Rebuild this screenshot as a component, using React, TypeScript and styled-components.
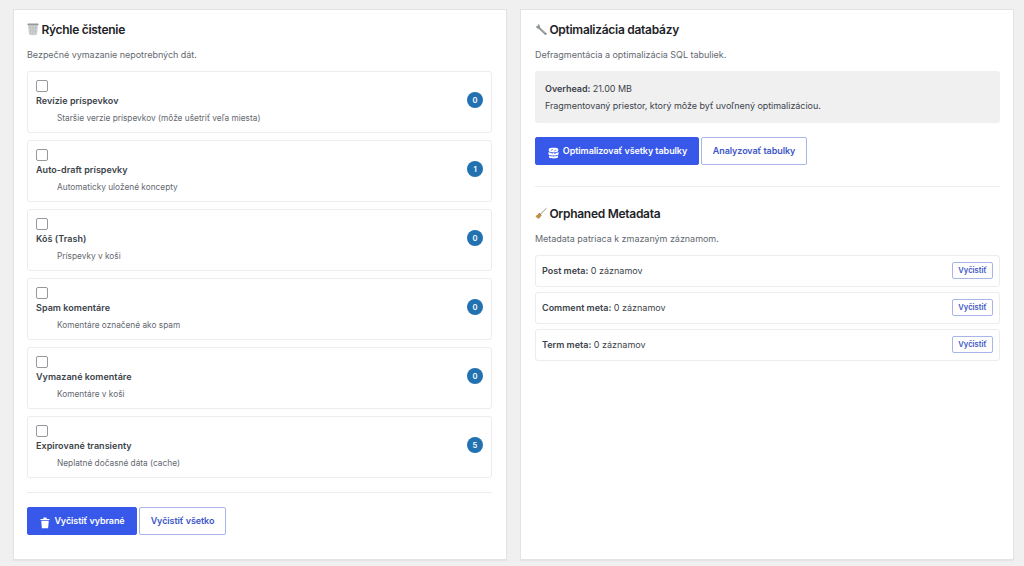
import React from "react";
import styled, { createGlobalStyle, css } from "styled-components";

const GlobalStyle = createGlobalStyle`
  *, *::before, *::after { box-sizing: border-box; }
  body {
    margin: 0;
    background: #f0f0f1;
    color: #3c434a;
    font-family: Inter, "Liberation Sans", sans-serif;
    font-size: 9px;
    line-height: 17px;
  }
`;

const Page = styled.main`
  display: grid;
  grid-template-columns: 494px 494px;
  gap: 13px;
  height: 566px;
  padding: 9px 0 6px 13px;
`;

const Panel = styled.section<{ $inset: number }>`
  display: flex;
  flex-direction: column;
  padding: 11px ${(p) => 27 - p.$inset}px 13px ${(p) => p.$inset}px;
  background: #fff;
  border: 1px solid #e2e3e4;
  box-shadow: 0 1px 1px rgba(0, 0, 0, 0.04);
`;

const Title = styled.h2`
  display: flex;
  align-items: center;
  gap: 2.4px;
  margin: 0;
  height: 17px;
  color: #1d2327;
  font-size: 12px;
  font-weight: 600;
  letter-spacing: -0.28px;
  white-space: nowrap;
  svg { flex: none; }
`;

const Lead = styled.p`
  margin: 8px 0;
  color: #646970;
  font-size: 9px;
  letter-spacing: -0.03px;
  white-space: nowrap;
`;

const CleanList = styled.div`
  display: flex;
  flex-direction: column;
  gap: 7px;
`;

const CleanItem = styled.label`
  display: flex;
  align-items: flex-start;
  justify-content: space-between;
  height: 62px;
  padding: 7px 8px 0;
  border: 1px solid #ebecee;
  border-radius: 3px;
`;

const CleanText = styled.span`
  display: flex;
  flex-direction: column;
`;

const Checkbox = styled.input`
  appearance: none;
  width: 12px;
  height: 12px;
  margin: 1px 0 0;
  background: #fff;
  border: 1px solid #95989c;
  border-radius: 2px;
`;

const ItemName = styled.strong`
  font-weight: 600;
  letter-spacing: 0.04px;
`;

const ItemHint = styled.span`
  margin-top: 1px;
  padding-left: 21px;
  color: #646970;
  font-size: 8.3px;
`;

const Badge = styled.span`
  display: flex;
  align-items: center;
  justify-content: center;
  width: 16px;
  height: 16px;
  margin-top: 13px;
  border-radius: 8px;
  background: #2271b1;
  color: #fff;
  font-size: 7.6px;
  font-weight: 600;
`;

const Divider = styled.hr<{ $top: number; $bottom: number }>`
  width: 100%;
  height: 1px;
  margin: ${(p) => p.$top}px 0 ${(p) => p.$bottom}px;
  border: 0;
  background: #ebecee;
`;

const Actions = styled.div`
  display: flex;
  gap: 2px;
`;

const Button = styled.button<{ $primary?: boolean; $small?: boolean; $width: number }>`
  display: flex;
  align-items: center;
  justify-content: center;
  gap: 4px;
  width: ${(p) => p.$width}px;
  height: 28px;
  padding: 0 0 1px;
  border: 1px solid #a9b5e6;
  border-radius: 2px;
  background: #fff;
  color: #3d56c6;
  font: 600 9px/17px Inter, "Liberation Sans", sans-serif;
  letter-spacing: -0.08px;
  white-space: nowrap;
  svg { position: relative; top: 2px; flex: none; }
  ${(p) =>
    p.$primary &&
    css`
      padding-left: 1px;
      background: #3858e9;
      border-color: #3858e9;
      color: #fff;
    `}
  ${(p) =>
    p.$small &&
    css`
      height: 17px;
      padding: 0;
      font-size: 7.6px;
      line-height: 15px;
      letter-spacing: 0;
    `}
`;

const Notice = styled.div`
  height: 52px;
  margin-bottom: 14px;
  padding: 9px 10px;
  border-radius: 3px;
  background: #f0f0f1;
  letter-spacing: -0.04px;
  p { margin: 0; }
  strong { font-weight: 600; }
`;

const MetaList = styled.div`
  display: flex;
  flex-direction: column;
  gap: 5px;
`;

const MetaRow = styled.div`
  display: flex;
  align-items: center;
  justify-content: space-between;
  height: 32px;
  padding: 0 6px 1px;
  border: 1px solid #ebecee;
  border-radius: 3px;
  strong { font-weight: 600; }
`;

const BinIcon = () => (
  <svg width="12" height="13" viewBox="0 0 12 13">
    <path d="M1 1.8 2 11.6Q6 12.8 10 11.6L11 1.8Z" fill="#d0d2d2" />
    <path d="M3.3 2.5 3.8 11.5M6 2.5v9.5M8.7 2.5 8.2 11.5M1.6 5h8.8M1.8 8h8.4" stroke="#b3b6b6" strokeWidth=".5" fill="none" />
    <rect x=".4" y=".6" width="11.2" height="1.6" rx=".7" fill="#969a9a" />
  </svg>
);

const WrenchIcon = () => (
  <svg width="12" height="13" viewBox="0 0 12 13">
    <path d="m4 4.7 6.7 6.2" stroke="#85898b" strokeWidth="2" strokeLinecap="round" />
    <path d="m4 4.4 6 5.6" stroke="#b8bcbd" strokeWidth=".7" strokeLinecap="round" />
    <path d="M2.7 1 2.9 3.1 1 3.2C1.2 5.2 3.1 6 4.6 5.2 5.6 4.3 5.2 1.8 2.7 1Z" fill="#909496" />
  </svg>
);

const BroomIcon = () => (
  <svg width="12" height="13" viewBox="0 0 12 13">
    <path d="M5 7.6 11.2 1.5" stroke="#8d7f6b" strokeWidth=".9" strokeLinecap="round" />
    <path d="M3.8 6.2Q2.5 8.4.4 9.1q1.2 2.2 3.3 2.7Q5.3 11 6.2 8.5Z" fill="#c69b45" />
    <path d="m3.9 6.1 2.4 2.4" stroke="#8c6430" strokeWidth="1" />
    <path d="M1.7 9.4 4 7.6M3 10.7l2-2" stroke="#9b7530" strokeWidth=".5" />
  </svg>
);

const TrashGlyph = () => (
  <svg width="10" height="12" viewBox="0 0 10 12">
    <path d="M.5 2h2.7L3.6.6h2.8L6.8 2h2.7v1.1h-9Z" fill="#fff" />
    <path d="M1.2 3.8h7.6l-.7 7.5H1.9Z" fill="#fff" />
  </svg>
);

const DatabaseGlyph = () => (
  <svg width="11" height="12" viewBox="0 0 11 12">
    <path d="M.8 2.1C.8.2 10.2.2 10.2 2.1v2C10.2 5.8.8 5.8.8 4.1Z" fill="#fff" />
    <path d="M.5 4.9c2 1.3 8 1.3 10 0v2.5c-1 1.3-9 1.3-10 0ZM1 8.5c2 1.2 7 1.2 9 0v1.7c-1 1.6-8 1.6-9 0Z" fill="#fff" />
    <path d="M2.8 3.4 4.8 2.4M6.2 4l2-1M2.8 5.7l2.3.6M6.2 6.6l2-.7" stroke="#3858e9" strokeWidth=".7" />
  </svg>
);

const cleanItems = [
  { name: "Revízie príspevkov", hint: "Staršie verzie príspevkov (môže ušetriť veľa miesta)", count: 0 },
  { name: "Auto-draft príspevky", hint: "Automaticky uložené koncepty", count: 1 },
  { name: "Kôš (Trash)", hint: "Príspevky v koši", count: 0 },
  { name: "Spam komentáre", hint: "Komentáre označené ako spam", count: 0 },
  { name: "Vymazané komentáre", hint: "Komentáre v koši", count: 0 },
  { name: "Expirované transienty", hint: "Neplatné dočasné dáta (cache)", count: 5 },
];

const metaRows = ["Post meta:", "Comment meta:", "Term meta:"];

export default function App() {
  return (
    <>
      <GlobalStyle />
      <Page>
        <Panel $inset={13}>
          <Title><BinIcon /> Rýchle čistenie</Title>
          <Lead>Bezpečné vymazanie nepotrebných dát.</Lead>
          <CleanList>
            {cleanItems.map((item) => (
              <CleanItem key={item.name}>
                <CleanText>
                  <Checkbox type="checkbox" />
                  <ItemName>{item.name}</ItemName>
                  <ItemHint>{item.hint}</ItemHint>
                </CleanText>
                <Badge>{item.count}</Badge>
              </CleanItem>
            ))}
          </CleanList>
          <Divider $top={14} $bottom={14} />
          <Actions>
            <Button $primary $width={110}><TrashGlyph />Vyčistiť vybrané</Button>
            <Button $width={87}>Vyčistiť všetko</Button>
          </Actions>
        </Panel>
        <Panel $inset={14}>
          <Title><WrenchIcon /> Optimalizácia databázy</Title>
          <Lead>Defragmentácia a optimalizácia SQL tabuliek.</Lead>
          <Notice>
            <p><strong>Overhead:</strong> 21.00 MB</p>
            <p>Fragmentovaný priestor, ktorý môže byť uvoľnený optimalizáciou.</p>
          </Notice>
          <Actions>
            <Button $primary $width={164}><DatabaseGlyph />Optimalizovať všetky tabulky</Button>
            <Button $width={106}>Analyzovať tabulky</Button>
          </Actions>
          <Divider $top={21} $bottom={18} />
          <Title><BroomIcon /> Orphaned Metadata</Title>
          <Lead>Metadata patriaca k zmazaným záznamom.</Lead>
          <MetaList>
            {metaRows.map((name) => (
              <MetaRow key={name}>
                <span><strong>{name}</strong> 0 záznamov</span>
                <Button $small $width={41}>Vyčistiť</Button>
              </MetaRow>
            ))}
          </MetaList>
        </Panel>
      </Page>
    </>
  );
}
